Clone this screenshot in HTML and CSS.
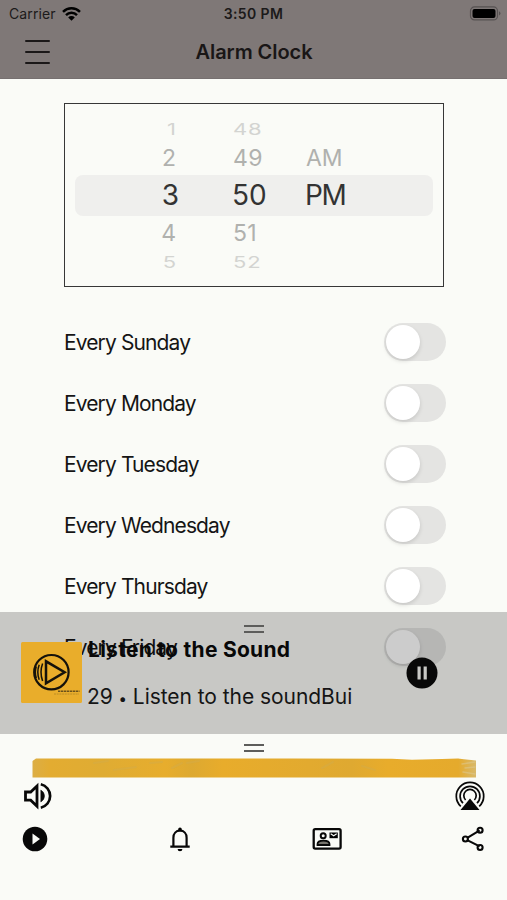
FILE: index.html
```html
<!DOCTYPE html>
<html lang="en">
<head>
<meta charset="utf-8">
<title>Alarm Clock</title>
<link rel="stylesheet" href="styles.css">
</head>
<body>
<div class="app">
  <header class="header">
    <div class="status">
      <div class="carrier"><span class="carrier-name">Carrier</span>
        <svg width="19" height="14" viewBox="0 0 19 14"><g fill="none" stroke="#000" stroke-width="2.5"><path d="M1 4.8a12.2 12.2 0 0 1 17 0"/><path d="M4 8.1a7.8 7.8 0 0 1 11 0"/></g><path d="M6.2 10.4a4.7 4.7 0 0 1 6.6 0L9.5 13.7z"/></svg>
      </div>
      <span class="time">3:50 PM</span>
      <svg class="battery" width="32" height="15" viewBox="0 0 32 15"><rect x="1.500" y=".9" width="27" height="13" rx="4" fill="none" stroke="#575252" stroke-width="1.2"/><rect x="3.500" y="2.900" width="23" height="9" rx="2"/><path d="M30 5.2q3 2.2 0 4.4z" fill="#575252"/></svg>
    </div>
    <div class="navbar">
      <div class="menu"><i></i><i></i><i></i></div>
      <h1 class="title">Alarm Clock</h1>
    </div>
  </header>
  <main class="content">
    <section class="picker">
      <div class="picker-row far top"><span class="hour">1</span><span class="minute">48</span><span class="period"></span></div>
      <div class="picker-row near"><span class="hour">2</span><span class="minute">49</span><span class="period">AM</span></div>
      <div class="picker-row selected"><span class="hour">3</span><span class="minute">50</span><span class="period">PM</span></div>
      <div class="picker-row near"><span class="hour">4</span><span class="minute">51</span><span class="period"></span></div>
      <div class="picker-row far"><span class="hour">5</span><span class="minute">52</span><span class="period"></span></div>
    </section>
    <section class="days">
      <div class="day"><span>Every Sunday</span><b class="switch"></b></div>
      <div class="day"><span>Every Monday</span><b class="switch"></b></div>
      <div class="day"><span>Every Tuesday</span><b class="switch"></b></div>
      <div class="day"><span>Every Wednesday</span><b class="switch"></b></div>
      <div class="day"><span>Every Thursday</span><b class="switch"></b></div>
      <div class="day"><span>Every Friday</span><b class="switch"></b></div>
    </section>
  </main>
  <div class="sheet">
    <section class="player">
      <div class="grip"></div>
      <div class="player-row">
        <svg class="cover" width="61" height="61" viewBox="0 0 61 61"><rect width="61" height="61" rx="1.5" fill="#e9ad2b"/><g fill="none" stroke="#15120b" stroke-width="2.2"><circle cx="30.4" cy="30.2" r="17.2"/><path d="M25 19.3v22L43.6 30.2z" stroke-width="2.5"/><path d="M21.6 21.5q-3.2 8.7 0 17.5M18.2 22.8q-2.8 7.4 0 15M15.3 24.5q-2 5.7 0 11.5" stroke-width="1.5"/></g><path d="M37 49.3h21.500" stroke="#6b511a" stroke-width="1.600" stroke-dasharray="2.4 .6"/><path d="M33 52h25" stroke="#b08626" stroke-width=".8" stroke-dasharray="2 .7"/></svg>
        <div class="track">
          <strong class="track-title">Listen to the Sound</strong>
          <span class="track-info">29 <span class="dot">•</span> Listen to the soundBui</span>
        </div>
        <svg class="pause" width="32" height="32" viewBox="0 0 32 32"><circle cx="16" cy="16" r="15.500" fill="#080808"/><path d="M11.500 9.500h3.200v13h-3.200zM17.600 9.500h3.200v13h-3.200z" fill="#c8c8c5"/></svg>
      </div>
    </section>
    <section class="controls">
      <div class="grip"></div>
      <svg class="brush" width="444" height="20" viewBox="0 0 444 20">
        <defs><linearGradient id="paint" x2="1"><stop stop-color="#dcae45"/><stop offset=".04" stop-color="#e3ac31"/><stop offset=".16" stop-color="#dfac33"/><stop offset=".3" stop-color="#e7ad2d"/><stop offset=".36" stop-color="#dda931"/><stop offset=".43" stop-color="#e8ac2b"/><stop offset=".72" stop-color="#dfa931"/><stop offset=".8" stop-color="#e8ac2b"/><stop offset=".96" stop-color="#e5aa2c"/><stop offset="1" stop-color="#d8b96b"/></linearGradient></defs>
        <path d="M.5 19.500V3L4 .5h256l100 .2 20 1 30-.7 16-.6 6 .8 12 1.200V19.500z" fill="url(#paint)"/>
        <g fill="none" stroke-linecap="round"><path d="M62 5l14-2M82 12l22-3M118 5l12-1M140 10l10-5M155 5l12-2M290 10l11-6M330 8l13 4" stroke="#d3ac48" stroke-width="2" opacity=".5"/><path d="M430 6l13-2M433 10l10-1M431 14l12 2" stroke="#dcc891" stroke-width="1.500" opacity=".55"/></g>
      </svg>
      <div class="icons audio">
        <svg width="30" height="30" viewBox="0 0 30 30"><path d="M2.500 11v8.200h5.200l6.300 6V5L7.700 11z" fill="none" stroke="#080808" stroke-width="2.800"/><path d="M17.800 9q3.700 2.200 3.700 6t-3.700 6z" fill="#080808" stroke="#080808" stroke-width=".5"/><path d="M17.800 3.300a12 12 0 0 1 0 23.400" fill="none" stroke="#080808" stroke-width="2.700"/></svg>
        <svg width="30" height="30" viewBox="0 0 30 30"><g fill="none" stroke="#080808" stroke-width="1.700"><path d="M5.800 25.300a13.700 13.700 0 1 1 18.400 0"/><path d="M8 22.200a9.900 9.900 0 1 1 14 0"/><path d="M10.600 19a6.200 6.200 0 1 1 8.800 0"/></g><path d="M15 17.500L24.500 29h-19z" fill="#080808"/></svg>
      </div>
      <div class="icons actions">
        <svg width="30" height="30" viewBox="0 0 30 30"><circle cx="15" cy="15" r="12.300" fill="#080808"/><path d="M12.500 9.500v11l7.500-5.500z" fill="#fafbf7"/></svg>
        <svg width="30" height="30" viewBox="0 0 30 30"><path d="M8.400 22v-8.300c0-4 2.600-7 6.600-7s6.600 3 6.600 7V22M5.300 22.700h19.400" fill="none" stroke="#080808" stroke-width="2.200"/><path d="M13.200 6.500V5.200a1.800 1.800 0 0 1 3.600 0v1.300zM12.600 24.900h4.800a2.400 2.400 0 0 1-4.800 0z"/></svg>
        <svg width="32" height="30" viewBox="0 0 32 30"><rect x="2.700" y="5.200" width="26.900" height="19.400" rx="1.500" fill="none" stroke="#080808" stroke-width="2.300"/><circle cx="12.200" cy="11.700" r="2.500" fill="none" stroke="#080808" stroke-width="2"/><path d="M6.500 21v-1c0-2.500 3.500-3.400 6-3.400s6 .9 6 3.400v1z" fill="#77756e" stroke="#080808" stroke-width="1.800"/><path d="M18.500 8.500h8.300v5.700h-8.300z"/><path d="M19.700 9.800l3 2 3-2" fill="none" stroke="#fafbf7" stroke-width="1.100"/></svg>
        <svg width="30" height="30" viewBox="0 0 30 30"><g fill="none" stroke="#080808" stroke-width="2.100"><path d="M9.700 13.600l12-7.200M9.700 16.400l12 6"/><circle cx="7.400" cy="15" r="2.500"/><circle cx="22.100" cy="6.300" r="2.500"/><circle cx="22.100" cy="23.500" r="2.500"/></g></svg>
      </div>
    </section>
  </div>
</div>
</body>
</html>
```
FILE: styles.css
```css
* { box-sizing: border-box; }
body { margin: 0; font-family: Inter, "Liberation Sans", sans-serif; color: #151515; background: #fafbf7; }
svg { display: block; flex: none; }
.app { position: relative; width: 507px; height: 900px; overflow: hidden; display: flex; flex-direction: column; background: #fafbf7; }
.header { height: 79px; flex: none; background: #7f7877; border-bottom: 1px solid #767070; }
.status { height: 27px; padding: 0 6px 0 9px; display: grid; grid-template-columns: 1fr auto 1fr; align-items: center; font-size: 14px; line-height: 27px; color: #1c1a1a; }
.carrier { display: flex; align-items: center; gap: 6px; }
.carrier-name { letter-spacing: .1px; }
.time { font-weight: 600; letter-spacing: .4px; margin-right: 3px; }
.battery { justify-self: end; }
.navbar { height: 50px; padding: 0 25px; display: grid; grid-template-columns: 1fr auto 1fr; align-items: center; }
.menu { display: flex; flex-direction: column; gap: 9px; width: 25px; }
.menu i { height: 2px; border-radius: 1px; background: #1b1818; }
.title { margin: 0 0 0 1px; font-size: 20px; line-height: 50px; font-weight: 600; letter-spacing: -.05px; color: #191616; }
.content { flex: 1; min-height: 0; overflow: hidden; padding: 24px 61px 0 64px; }
.picker { width: 380px; height: 184px; border: 1.500px solid #373737; padding: 14px 10px 0; color: #b0b1ae; }
.picker-row { display: grid; grid-template-columns: 110px 86px 1fr; height: 35px; line-height: 37px; font-size: 23px; }
.selected + .near { line-height: 35px; }
.hour { text-align: right; padding-right: 9px; }
.minute { padding-left: 48px; letter-spacing: .3px; }
.period { padding-left: 35px; }
.selected { height: 41px; line-height: 40px; font-size: 28px; color: #333; background: #efefed; border-radius: 8px; }
.selected .hour { padding-right: 6px; }
.selected .minute { padding-left: 47px; letter-spacing: 0; }
.selected .period { padding-left: 34px; letter-spacing: -1.500px; }
.far { height: 22px; line-height: 22px; font-size: 22px; color: #d3d4d1; transform: scaleY(.7); }
.far .minute { letter-spacing: .8px; }
.days { padding-top: 24px; }
.day { height: 61px; display: flex; align-items: center; justify-content: space-between; font-size: 21px; letter-spacing: -.88px; }
.day span { padding-top: 2px; }
.switch { width: 62px; height: 38px; padding: 2px; border-radius: 19px; background: #e4e4e2; }
.switch::before { content: ""; display: block; width: 34px; height: 34px; border-radius: 50%; background: #fff; box-shadow: 0 2px 4px #0002; }
.sheet { position: absolute; left: 0; right: 0; bottom: 0; height: 288px; }
.player { height: 122px; padding-top: 13px; background: rgba(0, 0, 0, .2); }
.grip { width: 20px; height: 8px; margin: 0 auto; border: solid #5d5d5b; border-width: 2px 0; }
.player-row { display: flex; align-items: flex-start; padding: 9px 69px 0 21px; }
.track { flex: 1; min-width: 0; padding-left: 6px; display: flex; flex-direction: column; white-space: nowrap; font-size: 21px; }
.track-title { line-height: 24px; margin-top: -4px; font-weight: 700; letter-spacing: .28px; color: #080808; }
.track-info { line-height: 28px; margin: 21px 0 0 -1px; letter-spacing: -.05px; }
.dot { font-size: 15px; }
.pause { margin-top: 15px; }
.controls { height: 166px; padding-top: 10px; background: #fafbf7; }
.brush { margin: 6px 0 0 32px; }
.icons { display: flex; justify-content: space-between; }
.audio { padding: 3px 22px 0 23px; }
.actions { padding: 13px 19px 0 20px; }
```
